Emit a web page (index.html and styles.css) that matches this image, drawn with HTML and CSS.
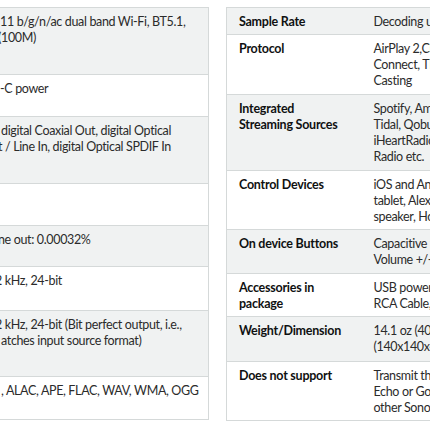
FILE: index.html
```html
<!DOCTYPE html>
<html>
<head>
<meta charset="utf-8">
<link rel="stylesheet" href="styles.css">
</head>
<body>
<div class="page">
  <table class="spec spec-left">
    <tr class="alt h67"><td><span class="cut1">11 b/g/n/ac dual band Wi-Fi, BT5.1,</span><br><span class="cut2">(100M)</span></td></tr>
    <tr class="h42"><td><span class="cut1">-C power</span></td></tr>
    <tr class="alt h67"><td><span class="cut0">digital Coaxial Out, digital Optical</span><br><span class="cut2">t / Line In, digital Optical SPDIF In</span></td></tr>
    <tr class="h42"><td></td></tr>
    <tr class="alt h41"><td><span class="cut2">ne out: 0.00032%</span></td></tr>
    <tr class="h44"><td><span class="cut5">2 kHz, 24-bit</span></td></tr>
    <tr class="alt h66"><td><span class="cut5">2 kHz, 24-bit (Bit perfect output, i.e.,</span><br><span class="cut0">atches input source format)</span></td></tr>
    <tr class="h43"><td><span class="cut0">, ALAC, APE, FLAC, WAV, WMA, OGG</span></td></tr>
  </table>

  <table class="spec spec-right">
    <colgroup><col class="col-label"><col class="col-value"></colgroup>
    <tr class="alt h27"><th>Sample Rate</th><td>Decoding up to 192 kHz, 24-bit</td></tr>
    <tr class="h60"><th>Protocol</th><td>AirPlay 2,Chromecast built-in,<br>Connect, TIDAL Connect,<br>Casting</td></tr>
    <tr class="alt h76"><th>Integrated<br>Streaming Sources</th><td>Spotify, Amazon Music,<br>Tidal, Qobuz, Deezer,<br>iHeartRadio, TuneIn,<br>Radio etc.</td></tr>
    <tr class="h59"><th>Control Devices</th><td>iOS and Android phone/<br>tablet, Alexa enabled<br>speaker, Home app</td></tr>
    <tr class="alt h44"><th>On device Buttons</th><td>Capacitive touch buttons<br>Volume +/-, Play/Pause</td></tr>
    <tr class="h43"><th>Accessories in<br>package</th><td>USB power cable,<br>RCA Cable, Optical cable</td></tr>
    <tr class="alt h45"><th>Weight/Dimension</th><td>14.1 oz (400g)<br>(140x140x40mm)</td></tr>
    <tr class="h59"><th>Does not support</th><td>Transmit through<br>Echo or Google speakers,<br>other Sonos speakers</td></tr>
  </table>
</div>
</body>
</html>
```

FILE: styles.css
```css
html, body {
  margin: 0;
  padding: 0;
  background: #ffffff;
  overflow: hidden;
}

.page {
  width: 430px;
  height: 430px;
  overflow: hidden;
  display: flex;
  align-items: flex-start;
  gap: 17px;
  padding-top: 7px;
  box-sizing: border-box;
  font-family: Lato, "Liberation Sans", sans-serif;
  font-size: 12.5px;
  line-height: 16px;
  letter-spacing: -0.35px;
  color: #2b2b2b;
}

.spec {
  border-collapse: collapse;
  flex: none;
  border: 1px solid #d5d9d9;
}

.spec tr {
  border-bottom: 1px solid #d5d9d9;
}

.spec tr.alt {
  background: #f0f2f2;
}

.spec th,
.spec td {
  vertical-align: top;
  text-align: left;
  padding: 0;
  white-space: nowrap;
  overflow: hidden;
}

.spec-left {
  width: 209px;
  border-left: none;
}

.spec-left td {
  padding-top: 6px;
  max-width: 208px;
}

.spec-right {
  width: 380px;
  table-layout: fixed;
}

.col-label {
  width: 135px;
}

.col-value {
  width: 244px;
}

.spec-right th {
  padding: 6px 12px 0 12px;
  font-weight: 700;
  letter-spacing: -0.25px;
  color: #0f1111;
}

.spec-right td {
  padding: 6px 12px 0 12px;
}

.cut0 { margin-left: 1px; }
.cut1 { margin-left: 0; }
.cut2 { margin-left: -2px; }
.cut5 { margin-left: -5px; }

.h27 { height: 27px; }
.h41 { height: 41px; }
.h42 { height: 42px; }
.h43 { height: 43px; }
.h44 { height: 44px; }
.h45 { height: 45px; }
.h59 { height: 59px; }
.h60 { height: 60px; }
.h66 { height: 66px; }
.h67 { height: 67px; }
.h76 { height: 76px; }
```
